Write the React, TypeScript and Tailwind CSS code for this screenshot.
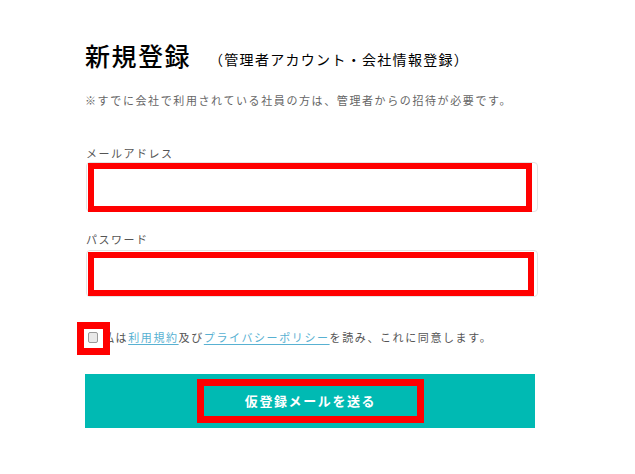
import React from 'react';

const jp = { fontFamily: '"Noto Sans CJK JP", "Noto Sans", sans-serif' };

export default function App() {
  return (
    <div className="min-h-[474px] w-[635px] bg-white text-[#555]" style={jp}>
      <div className="ml-[85px] w-[453px] pt-[38px]">
        {/* 見出し */}
        <div className="flex items-end h-[34px]">
          <h1 className="text-[25px] leading-[34px] text-black tracking-[1.5px] font-medium">新規登録</h1>
          <span className="ml-[18px] mb-[3px] text-[14px] leading-[20px] text-black tracking-[1.3px]">
            （管理者アカウント・会社情報登録）
          </span>
        </div>
        <p className="mt-[20px] text-[11px] leading-[16px] tracking-[1.6px] text-[#666]">
          ※すでに会社で利用されている社員の方は、管理者からの招待が必要です。
        </p>

        {/* メールアドレス */}
        <label className="block mt-[37px] text-[11px] leading-[16px] tracking-[1.5px] ml-[1px]">メールアドレス</label>
        <div className="mt-[1px] ml-[1px] h-[50px] w-[452px] rounded-[4px] border border-[#e3e3e3] flex">
          <div className="ml-[1px] h-[49px] w-[444px] border-[6px] border-[#ff0000]" />
        </div>

        {/* パスワード */}
        <label className="block mt-[19px] text-[11px] leading-[16px] tracking-[1.5px] ml-[1px]">パスワード</label>
        <div className="mt-[3px] ml-[1px] h-[47px] w-[452px] rounded-[4px] border border-[#e3e3e3] flex items-center">
          <div className="ml-[1px] h-[44px] w-[446px] border-[6px] border-[#ff0000]" />
        </div>

        {/* 同意 */}
        <div className="relative mt-[30px] flex items-center h-[20px]">
          <span className="ml-[3px] h-[11px] w-[10px] rounded-[2px] border border-[#9a9a9a] bg-[#e8e8e8]" />
          <p className="ml-[5px] text-[11px] leading-[16px] tracking-[1.6px]">
            私は<a className="text-[#58b1d2] underline underline-offset-2">利用規約</a>及び
            <a className="text-[#58b1d2] underline underline-offset-2">プライバシーポリシー</a>を読み、これに同意します。
          </p>
          <div className="absolute left-[-8px] top-[-5px] h-[33px] w-[33px] border-[7px] border-[#ff0000]" />
        </div>

        {/* 送信ボタン */}
        <button className="mt-[27px] flex h-[54px] w-[450px] items-center justify-center bg-[#00bab3]">
          <span className="flex h-[44px] w-[227px] ml-[1px] items-center justify-center border-[7px] border-[#ff0000] text-[13px] font-bold tracking-[1.6px] text-white">
            仮登録メールを送る
          </span>
        </button>
      </div>
    </div>
  );
}
